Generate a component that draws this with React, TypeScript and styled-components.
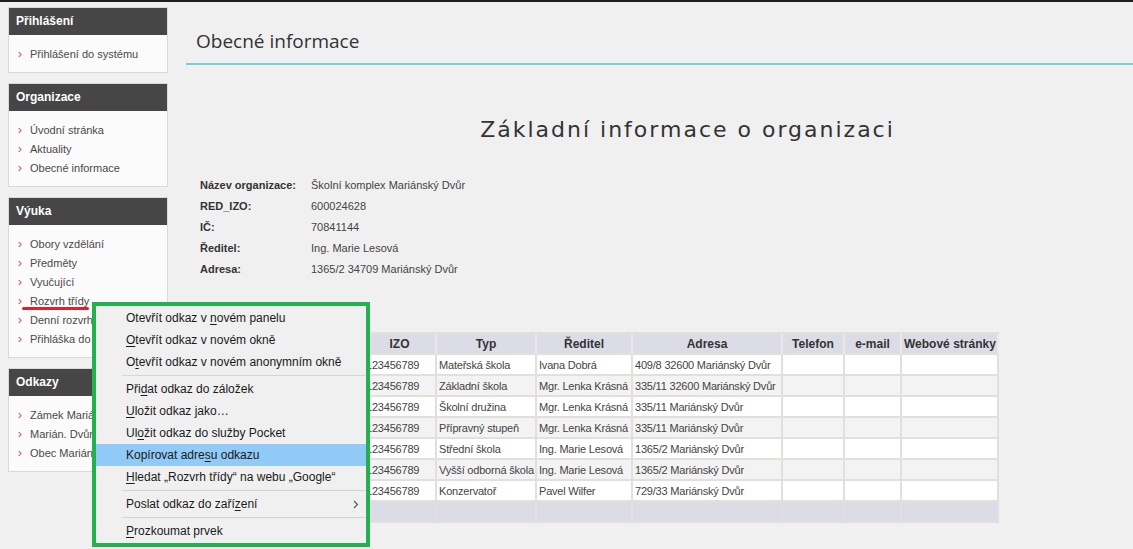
import React from 'react';
import styled, { createGlobalStyle } from 'styled-components';

const GlobalStyle = createGlobalStyle`
  * { box-sizing: border-box; }
  html, body {
    margin: 0;
    padding: 0;
    background: #f0f0f0;
  }
  body {
    font-family: "Liberation Sans", Arial, sans-serif;
    color: #444;
    overflow: hidden;
  }
`;

const Page = styled.div`
  position: relative;
  width: 1133px;
  height: 549px;
  overflow: hidden;
`;

const TopBar = styled.div`
  height: 2px;
  background: #1f1f1f;
`;

const Layout = styled.div`
  display: flex;
  align-items: flex-start;
  gap: 18px;
  padding-left: 8px;
`;

const Sidebar = styled.aside`
  flex: none;
  width: 160px;
  padding-top: 5px;
  display: flex;
  flex-direction: column;
  gap: 10px;
`;

const Box = styled.section`
  border: 1px solid #d9d9d9;
  background: #fbfbfb;
`;

const BoxHeader = styled.h3`
  margin: 0;
  height: 27px;
  line-height: 27px;
  padding-left: 7px;
  background: #464646;
  color: #fff;
  font-size: 12px;
  font-weight: bold;
`;

const BoxList = styled.ul`
  list-style: none;
  margin: 0;
  padding: 9px 0;
`;

const BoxItem = styled.li`
  display: flex;
  align-items: center;
  padding-left: 9px;
  height: 19px;
  font-size: 11px;
  color: #4a4a4a;
  white-space: nowrap;
  overflow: hidden;

  &::before {
    content: '›';
    flex: none;
    width: 12px;
    color: #e0474c;
    font-size: 12px;
  }
`;

const Main = styled.main`
  flex: 1;
  min-width: 0;
`;

const TitleBar = styled.h1`
  margin: 0;
  padding: 27px 0 10px 10px;
  border-bottom: 2px solid #72d0da;
  font-family: "Open Sans", "Liberation Sans", sans-serif;
  font-size: 19px;
  font-weight: normal;
  line-height: 24px;
  color: #333;
`;

const Content = styled.div`
  padding-left: 14px;
`;

const Heading = styled.h2`
  margin: 50px 0 0;
  padding-left: 42px;
  text-align: center;
  font-family: "DejaVu Sans", Verdana, sans-serif;
  font-size: 22px;
  font-weight: normal;
  letter-spacing: 2px;
  line-height: 30px;
  color: #333;
`;

const InfoGrid = styled.dl`
  display: grid;
  grid-template-columns: 111px auto;
  grid-auto-rows: 21px;
  align-items: center;
  margin: 29px 0 0;
  font-size: 11px;
`;

const InfoLabel = styled.dt`
  font-weight: bold;
  color: #333;
`;

const InfoValue = styled.dd`
  margin: 0;
  color: #444;
`;

const DataTable = styled.table`
  margin-top: 53px;
  border-collapse: separate;
  border-spacing: 0;
  table-layout: fixed;
  width: 799px;
  border-top: 2px solid #e2e0da;
  border-left: 2px solid #e2e0da;
`;

const Th = styled.th<{ $w: number }>`
  width: ${(p) => p.$w}px;
  height: 21px;
  padding: 0 2px;
  background: #dcdce6;
  border-right: 2px solid #ebe9e4;
  border-bottom: 2px solid #e2e0da;
  font-size: 12px;
  font-weight: bold;
  color: #333;
  text-align: center;
  white-space: nowrap;
  overflow: hidden;
`;

const Td = styled.td<{ $alt?: boolean; $foot?: boolean }>`
  height: 21px;
  padding: 0 0 0 2px;
  background: ${(p) => (p.$foot ? '#dcdce6' : p.$alt ? '#f3f3f3' : '#ffffff')};
  border-right: 2px solid #e2e0da;
  border-bottom: 2px solid #e2e0da;
  font-size: 11px;
  letter-spacing: -0.2px;
  color: #444;
  white-space: nowrap;
  overflow: hidden;
`;

const Annotation = styled.div`
  position: absolute;
  left: 22px;
  top: 307px;
  width: 67px;
  height: 3px;
  border-radius: 2px;
  background: #e3202a;
`;

const Menu = styled.ul`
  position: absolute;
  left: 92px;
  top: 302px;
  width: 278px;
  margin: 0;
  padding: 1px 0;
  list-style: none;
  background: #f0f0f0;
  border: 4px solid #22b14c;
  font-size: 12px;
  color: #1a1a1a;
`;

const MenuItem = styled.li<{ $active?: boolean }>`
  display: flex;
  align-items: center;
  height: 22px;
  padding: 0 7px 0 30px;
  background: ${(p) => (p.$active ? '#91c9f7' : 'transparent')};
  white-space: nowrap;

  u {
    text-decoration-thickness: 1px;
    text-underline-offset: 2px;
  }
`;

const SubArrow = styled.svg`
  margin-left: auto;
  width: 6px;
  height: 9px;
`;

const Separator = styled.li`
  height: 1px;
  margin: 2px 0 2px 26px;
  background: #d5d5d5;
`;

const sidebar = [
  { title: 'Přihlášení', items: ['Přihlášení do systému'] },
  { title: 'Organizace', items: ['Úvodní stránka', 'Aktuality', 'Obecné informace'] },
  {
    title: 'Výuka',
    items: ['Obory vzdělání', 'Předměty', 'Vyučující', 'Rozvrh třídy', 'Denní rozvrh', 'Přihláška do ŠD'],
  },
  { title: 'Odkazy', items: ['Zámek Mariánský Dvůr', 'Marián. Dvůr – město', 'Obec Mariánský Dvůr'] },
];

const info = [
  ['Název organizace:', 'Školní komplex Mariánský Dvůr'],
  ['RED_IZO:', '600024628'],
  ['IČ:', '70841144'],
  ['Ředitel:', 'Ing. Marie Lesová'],
  ['Adresa:', '1365/2 34709 Mariánský Dvůr'],
];

const columns: [string, number][] = [
  ['Název', 162],
  ['IZO', 73],
  ['Typ', 100],
  ['Ředitel', 96],
  ['Adresa', 150],
  ['Telefon', 62],
  ['e-mail', 57],
  ['Webové stránky', 97],
];

const schools = [
  ['Mateřská škola Mariánský Dvůr', 'Mateřská škola', 'Ivana Dobrá', '409/8 32600 Mariánský Dvůr'],
  ['Základní škola Mariánský Dvůr', 'Základní škola', 'Mgr. Lenka Krásná', '335/11 32600 Mariánský Dvůr'],
  ['Školní družina', 'Školní družina', 'Mgr. Lenka Krásná', '335/11 Mariánský Dvůr'],
  ['Přípravný stupeň ZŠ', 'Přípravný stupeň', 'Mgr. Lenka Krásná', '335/11 Mariánský Dvůr'],
  ['Gymnázium Mariánský Dvůr', 'Střední škola', 'Ing. Marie Lesová', '1365/2 Mariánský Dvůr'],
  ['VOŠ Mariánský Dvůr', 'Vyšší odborná škola', 'Ing. Marie Lesová', '1365/2 Mariánský Dvůr'],
  ['Konzervatoř Mariánský Dvůr', 'Konzervatoř', 'Pavel Wilfer', '729/33 Mariánský Dvůr'],
];

type Entry = { pre: string; key: string; post: string; active?: boolean; sub?: boolean } | 'sep';

const menu: Entry[] = [
  { pre: 'Otevřít odkaz v ', key: 'n', post: 'ovém panelu' },
  { pre: '', key: 'O', post: 'tevřít odkaz v novém okně' },
  { pre: 'O', key: 't', post: 'evřít odkaz v novém anonymním okně' },
  'sep',
  { pre: 'Při', key: 'd', post: 'at odkaz do záložek' },
  { pre: '', key: 'U', post: 'ložit odkaz jako…' },
  { pre: 'Ul', key: 'o', post: 'žit odkaz do služby Pocket' },
  { pre: 'Kopírovat adre', key: 's', post: 'u odkazu', active: true },
  { pre: '', key: 'H', post: 'ledat „Rozvrh třídy“ na webu „Google“' },
  'sep',
  { pre: 'Poslat odkaz do zaří', key: 'z', post: 'ení', sub: true },
  'sep',
  { pre: '', key: 'P', post: 'rozkoumat prvek' },
];

const App: React.FC = () => {
  return (
    <Page>
      <GlobalStyle />
      <TopBar />
      <Layout>
        <Sidebar>
          {sidebar.map((box) => (
            <Box key={box.title}>
              <BoxHeader>{box.title}</BoxHeader>
              <BoxList>
                {box.items.map((item) => (
                  <BoxItem key={item}>{item}</BoxItem>
                ))}
              </BoxList>
            </Box>
          ))}
        </Sidebar>

        <Main>
          <TitleBar>Obecné informace</TitleBar>
          <Content>
            <Heading>Základní informace o organizaci</Heading>
            <InfoGrid>
              {info.map(([label, value]) => (
                <React.Fragment key={label}>
                  <InfoLabel>{label}</InfoLabel>
                  <InfoValue>{value}</InfoValue>
                </React.Fragment>
              ))}
            </InfoGrid>

            <DataTable>
              <thead>
                <tr>
                  {columns.map(([name, w]) => (
                    <Th key={name} $w={w}>
                      {name}
                    </Th>
                  ))}
                </tr>
              </thead>
              <tbody>
                {schools.map((row, i) => (
                  <tr key={i}>
                    <Td $alt={i % 2 === 1}>{row[0]}</Td>
                    <Td $alt={i % 2 === 1}>123456789</Td>
                    <Td $alt={i % 2 === 1}>{row[1]}</Td>
                    <Td $alt={i % 2 === 1}>{row[2]}</Td>
                    <Td $alt={i % 2 === 1}>{row[3]}</Td>
                    <Td $alt={i % 2 === 1} />
                    <Td $alt={i % 2 === 1} />
                    <Td $alt={i % 2 === 1} />
                  </tr>
                ))}
                <tr>
                  {columns.map(([name]) => (
                    <Td key={name} $foot />
                  ))}
                </tr>
              </tbody>
            </DataTable>
          </Content>
        </Main>
      </Layout>

      <Annotation />

      <Menu>
        {menu.map((entry, i) =>
          entry === 'sep' ? (
            <Separator key={i} />
          ) : (
            <MenuItem key={i} $active={entry.active}>
              <span>
                {entry.pre}
                <u>{entry.key}</u>
                {entry.post}
              </span>
              {entry.sub && (
                <SubArrow viewBox="0 0 6 9">
                  <polyline points="1,1 4.5,4.5 1,8" fill="none" stroke="#555" strokeWidth="1.1" />
                </SubArrow>
              )}
            </MenuItem>
          ),
        )}
      </Menu>
    </Page>
  );
};

export default App;
